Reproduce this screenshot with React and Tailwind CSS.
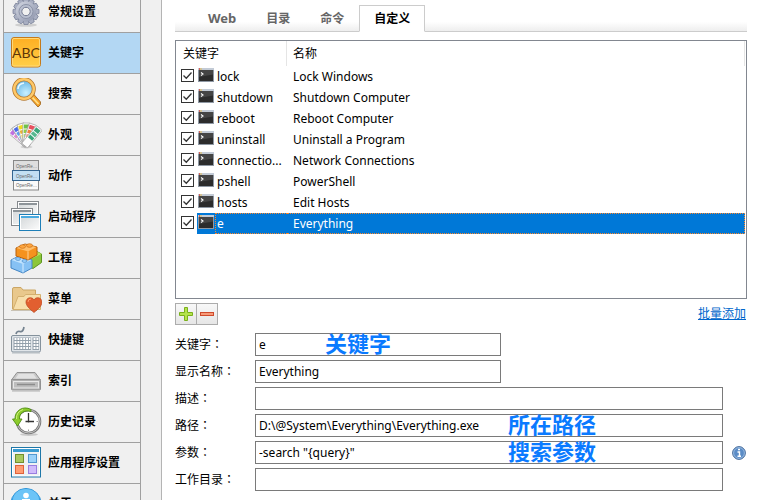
import { useState } from "react";
import clsx from "clsx";

const IconBox = ({ children }) => (
  <svg viewBox="0 0 32 32" className="h-8 w-8 shrink-0" aria-hidden="true">
    {children}
  </svg>
);

const GearIcon = () => (
  <IconBox>
    <defs>
      <linearGradient id="gear" x1="0" y1="0" x2="1" y2="1">
        <stop offset="0" stopColor="#d3d7e2" />
        <stop offset="1" stopColor="#8d94ab" />
      </linearGradient>
    </defs>
    <ellipse cx="16" cy="29" rx="11" ry="1.800" fill="#cfcfcf" />
    {[0, 30, 60, 90, 120, 150].map((angle) => (
      <path
        key={angle}
        d="M14 2.500h4l1 4v18l-1 4h-4l-1-4v-18z"
        transform={`rotate(${angle} 16 15.500)`}
        fill="#a9afc2"
        stroke="#7d849b"
        strokeWidth="0.8"
      />
    ))}
    <circle cx="16" cy="15.500" r="10.200" fill="url(#gear)" />
    <circle cx="16" cy="15.500" r="7" fill="#b9bfcf" stroke="#8c93a8" />
    <circle cx="16" cy="15.500" r="4.200" fill="#f0f0f0" stroke="#747b92" />
  </IconBox>
);

const KeywordIcon = () => (
  <IconBox>
    <defs>
      <linearGradient id="abc" x1="0" y1="0" x2="0" y2="1">
        <stop offset="0" stopColor="#ffae22" />
        <stop offset="1" stopColor="#ffcf48" />
      </linearGradient>
    </defs>
    <rect x="1.500" y="0.500" width="29" height="29.500" rx="2.500" fill="url(#abc)" stroke="#c47a1c" />
    <rect x="2.500" y="1.500" width="27" height="27.500" rx="1.500" fill="none" stroke="#ffd878" />
    <text
      x="16"
      y="20.500"
      textAnchor="middle"
      fontSize="14"
      fontWeight="400"
      fontFamily="Lato, sans-serif"
      fill="#5c3508"
    >
      ABC
    </text>
  </IconBox>
);

const SearchIcon = () => (
  <IconBox>
    <defs>
      <radialGradient id="lens" cx="0.6" cy="0.7" r="0.8">
        <stop offset="0" stopColor="#c8f0ff" />
        <stop offset="1" stopColor="#4fa9e0" />
      </radialGradient>
    </defs>
    <path d="M19 19l4-3.500 7.500 8.500q.8 3-2.500 5z" fill="#f7a428" stroke="#a8702a" />
    <path d="M22.500 19.500l6 6.500" stroke="#ffe08a" strokeWidth="1.800" />
    <circle cx="14" cy="11" r="9.800" fill="url(#lens)" stroke="#b67a2f" strokeWidth="4" />
    <circle cx="14" cy="11" r="9.800" fill="none" stroke="#ffc968" strokeWidth="2.400" />
    <path d="M8 11q0-5 6-6" fill="none" stroke="#e8f8ff" strokeWidth="1.600" />
  </IconBox>
);

const swatches = [
  { angle: -50, colors: ["#c06fe0", "#e08ad0", "#d8b0e8"] },
  { angle: -33, colors: ["#4d6ce8", "#5a9cf0", "#9cc4f5"] },
  { angle: -16, colors: ["#f0d820", "#e8b030", "#f5e070"] },
  { angle: 1, colors: ["#6fc24a", "#8fd040", "#b0dc80"] },
  { angle: 19, colors: ["#e8505e", "#f08040", "#f0a090"] },
  { angle: 40, colors: ["#3aa77a", "#58b890", "#3aa77a"] },
];

const AppearanceIcon = () => (
  <IconBox>
    <ellipse cx="16.500" cy="28" rx="6" ry="1.500" fill="#d2d2d2" />
    {swatches.map(({ angle, colors }) => (
      <g key={angle} transform={`rotate(${angle} 16 24.500)`}>
        <rect x="12.500" y="4" width="7.500" height="23" rx="1" fill="#fdfdfd" stroke="#a0a0a0" strokeWidth="0.700" />
        <rect x="13.500" y="5.500" width="5.500" height="4" fill={colors[0]} />
        <rect x="13.500" y="10.500" width="5.500" height="3.500" fill={colors[1]} />
        <rect x="13.500" y="15" width="5.500" height="3.500" fill={colors[2]} />
      </g>
    ))}
  </IconBox>
);

const ActionIcon = () => (
  <IconBox>
    <rect x="3.500" y="0.500" width="25" height="29.500" fill="#fafafa" stroke="#888888" />
    <rect x="4" y="1" width="24" height="9" fill="#dedede" />
    <rect x="2.500" y="10.500" width="27" height="10" fill="#c3dff3" stroke="#35658f" />
    {[7.500, 17.500, 27].map((y) => (
      <text
        key={y}
        x="6"
        y={y}
        fontSize="4.500"
        fontWeight="400"
        fontFamily="'Liberation Sans', sans-serif"
        fill="#666666"
      >
        OpenRe…
      </text>
    ))}
  </IconBox>
);

const MiniWindow = ({ x, y, w, h, bar, edge }) => (
  <g>
    <rect x={x + 0.5} y={y + 0.5} width={w} height={h} fill="#ffffff" stroke={edge} />
    <rect x={x + 2} y={y + 2} width={w - 3} height={h - 3} fill="url(#pane)" />
    <rect x={x + 2} y={y + 2} width={w - 3} height="2" fill={bar} />
  </g>
);

const StartupIcon = () => (
  <IconBox>
    <defs>
      <linearGradient id="pane" x1="0" y1="0" x2="1" y2="1">
        <stop offset="0" stopColor="#d4d8da" />
        <stop offset="1" stopColor="#fafafa" />
      </linearGradient>
    </defs>
    <MiniWindow x={7} y={0} w={21} h={17} bar="#8d9499" edge="#85898d" />
    <MiniWindow x={1} y={7} w={21} h={17} bar="#8d9499" edge="#85898d" />
    <MiniWindow x={9} y={13} w={21} h={16} bar="#4aaae0" edge="#1f7fb8" />
  </IconBox>
);

const ProjectIcon = () => (
  <IconBox>
    <path d="M20 13l6-4 5.500 3v8.500l-8.500 6-4-2z" fill="#8cc63a" stroke="#5d9422" />
    <path d="M20 13l6-4 5.500 3-8.500 4z" fill="#b8e45c" />
    <path d="M1 18l8-4 13 4v8l-9 5-12-5z" fill="#86c1f4" stroke="#4586c4" />
    <path d="M1.500 18l7.500-3.500 12.500 3.500-8.500 4z" fill="#c0e3ff" />
    <path d="M13 22v8.500" stroke="#d7edff" />
    <path d="M6 6l9-4 12 3v8l-9 5-12-4z" fill="#f5921e" stroke="#b7610f" />
    <path d="M6.500 6l8.500-3.500 11.500 2.500-8.500 4.500z" fill="#ffbe6a" />
    <path d="M18 9.500v8" stroke="#ffd49a" />
    <ellipse cx="12.500" cy="4.500" rx="3" ry="1.800" fill="#ffa63f" stroke="#c96d12" strokeWidth="0.700" />
    <ellipse cx="19.500" cy="3.500" rx="3" ry="1.800" fill="#ffa63f" stroke="#c96d12" strokeWidth="0.700" />
    <ellipse cx="8" cy="17" rx="2.500" ry="1.400" fill="#9bd0fb" stroke="#4a8dcb" strokeWidth="0.700" />
    <ellipse cx="14.500" cy="19" rx="2.500" ry="1.400" fill="#9bd0fb" stroke="#4a8dcb" strokeWidth="0.700" />
  </IconBox>
);

const MenuIcon = () => (
  <IconBox>
    <path d="M2.500 26V6q0-1.500 1.500-1.500h7l2 2.500h12.500v19z" fill="#e9c88c" stroke="#cba665" />
    <path d="M3 26.500l5-13h6l1.500-2H30.500v15z" fill="#f7dfac" stroke="#d4b06f" />
    <path d="M1 27.500h26" stroke="#c9c2b4" />
    <path
      d="M24 29.500C19 25.500 16 22.500 16 19c0-4.500 6-6 8-2 2-4 8-2.500 8 2 0 3.500-3 6.500-8 10.500z"
      fill="#e25f30"
      stroke="#b8451c"
      strokeWidth="0.700"
    />
    <path d="M18 19q0-3 3-3" fill="none" stroke="#ff9968" />
  </IconBox>
);

const KeyboardIcon = () => (
  <IconBox>
    <path d="M6 10q1-3.500 4-2.500t4-4.500" fill="none" stroke="#74828f" strokeWidth="1.700" />
    <rect x="1.500" y="11.500" width="29" height="16.500" rx="1.500" fill="#e0e5e9" stroke="#84919c" />
    <path d="M2 29h28" stroke="#b4bbc1" />
    <rect x="3.500" y="13.500" width="17.500" height="12.500" fill="#93a0ab" />
    <rect x="22.500" y="13.500" width="6.500" height="12.500" fill="#93a0ab" />
    {[15, 18, 21, 24].map((y) => (
      <g key={y} stroke="#ffffff" strokeWidth="2">
        <path d={`M4.500 ${y}H20.500`} strokeDasharray="2 0.900" />
        <path d={`M23.500 ${y}H28.500`} strokeDasharray="2 0.900" />
      </g>
    ))}
  </IconBox>
);

const IndexIcon = () => (
  <IconBox>
    <path d="M7 7.500h18l5.500 7.500h-29z" fill="#c8c8c8" stroke="#929292" />
    <path d="M8.500 9h15l3 4.500h-21z" fill="#e2e2e2" />
    <rect x="1.500" y="14.500" width="29" height="10.500" rx="1" fill="#b0b0b0" stroke="#929292" />
    <rect x="3.500" y="16.500" width="25" height="6.500" fill="#bdbdbd" stroke="#e8e8e8" />
    <path d="M7 19.500h18" stroke="#8c8c8c" strokeWidth="1.500" />
    <path d="M2 26.500h28" stroke="#d0d0d0" />
  </IconBox>
);

const HistoryIcon = () => (
  <IconBox>
    <ellipse cx="19" cy="28.500" rx="9" ry="1.500" fill="#c9c9c9" />
    <circle cx="18.500" cy="15.500" r="11.500" fill="#ffffff" stroke="#777777" strokeWidth="2.600" />
    <circle cx="18.500" cy="15.500" r="11.500" fill="none" stroke="#c4c4c4" strokeWidth="1" />
    <path d="M18.500 7v9.500M15.500 15.500h8.500" stroke="#333333" strokeWidth="1.300" />
    <path d="M18.500 23.500v1.500M26.500 15.500h1.500" stroke="#999999" />
    <path
      d="M21 3.500C13-1 4.500 5 5 13H2.500l5 7 4.500-7H9.500C9 7.500 14 3.500 21 5.500z"
      fill="#8ccb2c"
      stroke="#4f8d13"
      strokeWidth="0.900"
    />
    <path d="M6.500 13Q6 6 13 3.500" fill="none" stroke="#cdf07e" />
  </IconBox>
);

const AppSettingsIcon = () => (
  <IconBox>
    <rect x="1.500" y="0.500" width="29" height="29.500" fill="#ffffff" stroke="#1e77a8" />
    <rect x="3" y="2" width="26" height="26.500" fill="#eef1f3" />
    <rect x="3" y="2" width="26" height="3" fill="#3a9bd0" />
    <rect x="5.500" y="7.500" width="8" height="8" fill="#a9c95d" stroke="#718f2d" />
    <rect x="18.500" y="7.500" width="8" height="8" fill="#9bd2fa" stroke="#5298d0" />
    <rect x="5.500" y="18.500" width="8" height="8" fill="#ff9c72" stroke="#e0623a" />
    <rect x="18.500" y="18.500" width="8" height="8" fill="#d0bbfb" stroke="#9a7ee0" />
  </IconBox>
);

const AboutIcon = () => (
  <IconBox>
    <circle cx="16" cy="15.500" r="15" fill="#3aa5ea" stroke="#2e93d6" />
    <path d="M3 12a13 11 0 0 1 26 0q-13 5-26 0z" fill="#6cc4f7" />
    <circle cx="16" cy="7.500" r="2.800" fill="#ffffff" />
    <path d="M12 13h6v11h3" fill="none" stroke="#ffffff" strokeWidth="4" />
  </IconBox>
);

const TerminalIcon = () => (
  <svg viewBox="0 0 16 14" className="h-3.5 w-4 shrink-0" aria-hidden="true">
    <rect x="0" y="0" width="16" height="14" fill="#8f98a3" />
    <rect x="0" y="0" width="16" height="2" fill="#c3cbd6" />
    <path d="M1 1h1" stroke="#e0402c" strokeWidth="1.400" />
    <path d="M2.500 1h1" stroke="#f0b429" strokeWidth="1.400" />
    <rect x="1" y="2" width="14" height="11" fill="#2c2c2c" />
    <path d="M1 2h14v4.500L1 9z" fill="#454545" />
    <path d="M3 4.500l2 1.500-2 1.500" fill="none" stroke="#ffffff" strokeWidth="1.100" />
  </svg>
);

const InfoIcon = () => (
  <svg viewBox="0 0 14 14" className="h-3.5 w-3.5" aria-hidden="true">
    <circle cx="7" cy="7" r="6.400" fill="#5b8cc6" stroke="#4c6f9c" />
    <circle cx="7" cy="7" r="5.400" fill="none" stroke="#a5c3e4" strokeWidth="0.800" />
    <path d="M6 3.500h2M5.500 6h2v4M5.500 10.300h3.500" fill="none" stroke="#ffffff" strokeWidth="1.400" />
  </svg>
);

const menuItems = [
  { label: "常规设置", Icon: GearIcon },
  { label: "关键字", Icon: KeywordIcon },
  { label: "搜索", Icon: SearchIcon },
  { label: "外观", Icon: AppearanceIcon },
  { label: "动作", Icon: ActionIcon },
  { label: "启动程序", Icon: StartupIcon },
  { label: "工程", Icon: ProjectIcon },
  { label: "菜单", Icon: MenuIcon },
  { label: "快捷键", Icon: KeyboardIcon },
  { label: "索引", Icon: IndexIcon },
  { label: "历史记录", Icon: HistoryIcon },
  { label: "应用程序设置", Icon: AppSettingsIcon },
  { label: "关于", Icon: AboutIcon },
];

const tabs = [
  { label: "Web", size: "text-[13px]" },
  { label: "目录", size: "text-xs" },
  { label: "命令", size: "text-xs" },
  { label: "自定义", size: "text-xs" },
];

const keywords = [
  { keyword: "lock", name: "Lock Windows" },
  { keyword: "shutdown", name: "Shutdown Computer" },
  { keyword: "reboot", name: "Reboot Computer" },
  { keyword: "uninstall", name: "Uninstall a Program" },
  { keyword: "connectio...", name: "Network Connections" },
  { keyword: "pshell", name: "PowerShell" },
  { keyword: "hosts", name: "Edit Hosts" },
  { keyword: "e", name: "Everything" },
];

const fields = [
  { id: "keyword", label: "关键字", value: "e", short: true, note: "关键字", noteClass: "left-[70px]" },
  { id: "title", label: "显示名称", value: "Everything", short: true },
  { id: "description", label: "描述", value: "" },
  {
    id: "path",
    label: "路径",
    value: "D:\\@System\\Everything\\Everything.exe",
    note: "所在路径",
    noteClass: "left-[253px]",
  },
  {
    id: "params",
    label: "参数",
    value: '-search "{query}"',
    note: "搜索参数",
    noteClass: "left-[253px]",
    info: true,
  },
  { id: "workdir", label: "工作目录", value: "" },
];

const Sidebar = () => {
  const [active, setActive] = useState("关键字");

  return (
    <nav className="w-[161px] shrink-0 bg-[#f0f0f0] pl-[3px] pr-5">
      <ul className="-mt-2 border-x border-[#a0a0a0]">
        {menuItems.map(({ label, Icon }) => (
          <li key={label} className="border-b border-[#a0a0a0]">
            <button
              type="button"
              onClick={() => setActive(label)}
              className={clsx(
                "flex h-10 w-full items-center gap-1.5 pl-1.5 text-xs font-bold whitespace-nowrap text-black",
                active === label && "bg-[#b3d7f3]"
              )}
            >
              <Icon />
              {label}
            </button>
          </li>
        ))}
      </ul>
    </nav>
  );
};

const Tabs = () => {
  const [active, setActive] = useState("自定义");

  return (
    <div className="flex h-8 items-end border-b border-[#cccccc] bg-linear-to-b from-white from-70% to-[#eeeeee] pl-[18px]">
      {tabs.map(({ label, size }) => (
        <button
          key={label}
          type="button"
          onClick={() => setActive(label)}
          className={clsx(
            "-mb-px h-[27px] border px-3.5 font-bold",
            size,
            active === label
              ? "border-[#cccccc] border-b-white bg-white text-black"
              : "border-transparent text-[#666666]"
          )}
        >
          {label}
        </button>
      ))}
    </div>
  );
};

const KeywordTable = () => {
  const [selected, setSelected] = useState("e");

  return (
    <div className="mt-2 min-h-[259px] border border-[#828790] pr-px">
      <table className="w-full table-fixed border-separate border-spacing-0 text-left text-xs">
        <colgroup>
          <col className="w-[111px]" />
          <col />
        </colgroup>
        <thead>
          <tr className="h-[25px]">
            <th className="border-r border-[#e5e5e5] p-0 pl-[7px] font-normal">关键字</th>
            <th className="border-r border-[#e5e5e5] p-0 pl-1.5 font-normal">名称</th>
          </tr>
        </thead>
        <tbody>
          {keywords.map(({ keyword, name }) => {
            const isSelected = selected === keyword;
            return (
              <tr key={keyword} onClick={() => setSelected(keyword)} className="h-[21px] leading-[19px]">
                <td className="p-0">
                  <div className="flex items-start pl-[5px]">
                    <label className="mt-[3px] grid h-[13px] w-[13px] shrink-0">
                      <input
                        type="checkbox"
                        defaultChecked
                        aria-label={keyword}
                        className="peer col-start-1 row-start-1 h-[13px] w-[13px] appearance-none border border-[#333333] bg-white"
                      />
                      <svg
                        viewBox="0 0 13 13"
                        className="pointer-events-none invisible col-start-1 row-start-1 h-[13px] w-[13px] peer-checked:visible"
                      >
                        <path d="M2.500 6.500l2.800 2.800 5.200-5.800" fill="none" stroke="#333333" strokeWidth="1.300" />
                      </svg>
                    </label>
                    <div
                      className={clsx(
                        "ml-[3px] flex min-w-0 grow items-start pl-px",
                        isSelected && "bg-[#0078d7] text-white"
                      )}
                    >
                      <span className="pt-0.5">
                        <TerminalIcon />
                      </span>
                      <span
                        className={clsx(
                          "ml-px grow border border-r-0 border-dotted pl-px whitespace-nowrap",
                          isSelected ? "border-[#ff8728]" : "border-transparent"
                        )}
                      >
                        {keyword}
                      </span>
                    </div>
                  </div>
                </td>
                <td className="p-0">
                  <div
                    className={clsx(
                      "truncate border border-l-0 border-dotted pl-1.5",
                      isSelected ? "border-[#ff8728] bg-[#0078d7] text-white" : "border-transparent"
                    )}
                  >
                    {name}
                  </div>
                </td>
              </tr>
            );
          })}
        </tbody>
      </table>
    </div>
  );
};

const Toolbar = () => (
  <div className="mt-1 flex items-center justify-between pr-px">
    <div className="flex">
      <button
        type="button"
        aria-label="添加"
        className="flex h-[22px] w-[22px] items-center justify-center border border-[#acacac] bg-linear-to-b from-[#f8f8f8] to-[#e6e6e6]"
      >
        <svg viewBox="0 0 14 14" className="h-3.5 w-3.5">
          <path d="M5.500.5h3v5h5v3h-5v5h-3v-5h-5v-3h5z" fill="#b4e34c" stroke="#7ab01c" />
        </svg>
      </button>
      <button
        type="button"
        aria-label="删除"
        className="-ml-px flex h-[22px] w-[22px] items-center justify-center border border-[#acacac] bg-linear-to-b from-[#f8f8f8] to-[#e6e6e6]"
      >
        <svg viewBox="0 0 14 14" className="h-3.5 w-3.5">
          <rect x="0.500" y="5.500" width="13" height="3" fill="#f79a78" stroke="#cf4a2c" />
        </svg>
      </button>
    </div>
    <a href="#batch" className="text-xs text-[#0066cc] underline">
      批量添加
    </a>
  </div>
);

const KeywordForm = () => (
  <form className="mt-2 space-y-1">
    {fields.map(({ id, label, value, short, note, noteClass, info }) => (
      <div key={id} className="flex items-center">
        <label htmlFor={id} className="w-20 shrink-0 text-xs">
          {label}
          <span className="font-['Noto_Sans_CJK_TC',sans-serif]">：</span>
        </label>
        <div className="relative grow">
          <input
            id={id}
            type="text"
            defaultValue={value}
            className={clsx(
              "block h-[23px] border border-[#7a7a7a] bg-white px-[3px] text-xs",
              short ? "w-[246px]" : "w-full"
            )}
          />
          {note && (
            <span
              className={clsx(
                "pointer-events-none absolute top-0 font-['Noto_Sans_CJK_SC',sans-serif] text-[22px] leading-[18px] font-bold whitespace-nowrap text-[#0a7aff]",
                noteClass
              )}
            >
              {note}
            </span>
          )}
        </div>
        <div className="flex w-6 shrink-0 justify-end pr-px">
          {info && (
            <button type="button" aria-label="参数说明">
              <InfoIcon />
            </button>
          )}
        </div>
      </div>
    ))}
  </form>
);

const App = () => {
  return (
    <div className="flex h-screen overflow-hidden bg-white font-['Noto_Sans','Noto_Sans_CJK_SC',sans-serif] text-black">
      <Sidebar />
      <main className="min-w-0 grow border-l border-[#b4b4b4] px-[13px]">
        <Tabs />
        <KeywordTable />
        <Toolbar />
        <KeywordForm />
      </main>
    </div>
  );
};

export default App;
